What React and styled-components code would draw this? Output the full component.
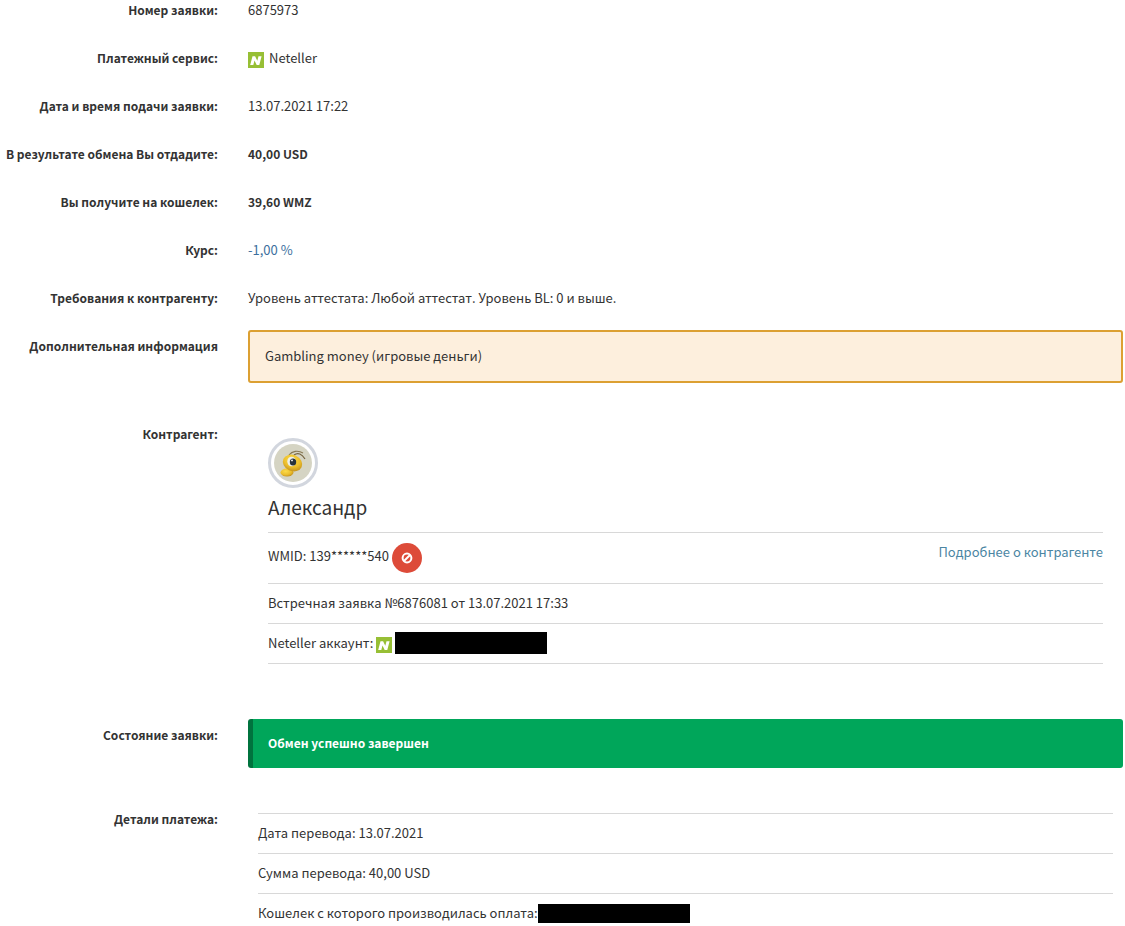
import React from 'react';
import styled, { createGlobalStyle } from 'styled-components';

export default function App() {
  return (
    <Page>
      <GlobalStyle />
      <Details>
        <Field label="Номер заявки:">6875973</Field>
        <Field label="Платежный сервис:">
          <WithIcon>
            <NetellerIcon />
            Neteller
          </WithIcon>
        </Field>
        <Field label="Дата и время подачи заявки:">13.07.2021 17:22</Field>
        <Field label="В результате обмена Вы отдадите:">
          <Amount>40,00 USD</Amount>
        </Field>
        <Field label="Вы получите на кошелек:">
          <Amount>39,60 WMZ</Amount>
        </Field>
        <Field label="Курс:">
          <Rate>-1,00 %</Rate>
        </Field>
        <Field label="Требования к контрагенту:">
          Уровень аттестата: Любой аттестат. Уровень BL: 0 и выше.
        </Field>
        <Field label="Дополнительная информация" block>
          <Note>Gambling money (игровые деньги)</Note>
        </Field>
        <Field label="Контрагент:" block>
          <Partner />
        </Field>
        <Field label="Состояние заявки:" block>
          <Status>Обмен успешно завершен</Status>
        </Field>
        <Field label="Детали платежа:" block>
          <Payment>
            <Item>Дата перевода: 13.07.2021</Item>
            <Item>Сумма перевода: 40,00 USD</Item>
            <Item>
              Кошелек с которого производилась оплата:
              <Hidden $height={19} />
            </Item>
          </Payment>
        </Field>
      </Details>
    </Page>
  );
}

function Field({ label, block, children }) {
  return (
    <Row $block={block}>
      <Label>{label}</Label>
      <Value $block={block}>{children}</Value>
    </Row>
  );
}

function Partner() {
  return (
    <PartnerBox>
      <Avatar>
        <AntPicture />
      </Avatar>
      <Name>Александр</Name>
      <WmidRow>
        <Wmid>
          <WmidText>WMID: 139******540</WmidText>
          <BlockButton type="button" aria-label="Заблокировать">
            <BanIcon />
          </BlockButton>
        </Wmid>
        <MoreLink href="#partner">Подробнее о контрагенте</MoreLink>
      </WmidRow>
      <List>
        <Item>Встречная заявка №6876081 от 13.07.2021 17:33</Item>
        <Item>
          <WithIcon $gap={3}>
            Neteller аккаунт:
            <NetellerIcon />
            <Hidden $height={22} />
          </WithIcon>
        </Item>
      </List>
    </PartnerBox>
  );
}

function NetellerIcon() {
  return (
    <svg width="16" height="16" viewBox="0 0 16 16" aria-hidden="true">
      <rect width="16" height="16" fill="#97bf35" />
      <path d="M2.2 13 4.5 4.2h2.6l2.2 4.6 1.2-4.6h3.1l-2.3 8.8H8.7L6.5 8.4 5.3 13z" fill="#fff" />
    </svg>
  );
}

function BanIcon() {
  return (
    <svg width="12" height="12" viewBox="0 0 12 12" fill="none" stroke="#fff" strokeWidth="2" aria-hidden="true">
      <circle cx="6" cy="6" r="4.4" />
      <path d="M3 9 9 3" />
    </svg>
  );
}

function AntPicture() {
  return (
    <svg width="38" height="38" viewBox="0 0 38 38" aria-hidden="true">
      <defs>
        <radialGradient id="head" cx="40%" cy="35%" r="70%">
          <stop offset="0" stopColor="#fbdc48" />
          <stop offset="0.6" stopColor="#ecbe2c" />
          <stop offset="1" stopColor="#c08f1c" />
        </radialGradient>
      </defs>
      <circle cx="19" cy="19" r="19" fill="#d5d4c3" />
      <path d="M15 11C18 7 24 6 29 9" fill="none" stroke="#8a7a55" strokeWidth="1.2" />
      <path d="M20 11C24 8 28 10 31 15" fill="none" stroke="#75633f" strokeWidth="1.2" />
      <ellipse cx="13" cy="28.5" rx="6.5" ry="4" fill="url(#head)" />
      <ellipse cx="18.5" cy="19" rx="10" ry="8" fill="url(#head)" transform="rotate(25 18.5 19)" />
      <ellipse cx="17.5" cy="17.5" rx="4.2" ry="4.8" fill="#eef0ea" />
      <ellipse cx="19" cy="18" rx="3.2" ry="3.6" fill="#28333c" />
      <circle cx="18" cy="16.4" r="0.9" fill="#fff" />
    </svg>
  );
}

const GlobalStyle = createGlobalStyle`
  body {
    margin: 0;
    background: #fff;
    color: #333;
    font-family: 'Noto Sans CJK SC', 'Noto Sans', sans-serif;
    font-size: 13px;
    line-height: 20px;
  }
`;

const Page = styled.main`
  padding: 0 2px;
`;

const Details = styled.dl`
  margin: 0;
`;

const Row = styled.div`
  display: grid;
  grid-template-columns: 216px 1fr;
  column-gap: 30px;
  margin-bottom: ${(p) => (p.$block ? 35 : 22)}px;

  &:first-child > * {
    padding-top: 0;
  }

  &:last-child {
    margin-bottom: 0;
  }
`;

const Label = styled.dt`
  padding-top: 6px;
  font-size: 12px;
  font-weight: 700;
  text-align: right;
  white-space: nowrap;
`;

const Value = styled.dd`
  min-width: 0;
  margin: 0;
  padding-top: ${(p) => (p.$block ? 0 : 6)}px;
`;

const WithIcon = styled.div`
  display: flex;
  align-items: center;
  gap: ${(p) => p.$gap || 5}px;

  svg {
    position: relative;
    top: 2px;
  }
`;

const Amount = styled.strong`
  font-size: 12px;
  font-weight: 700;
`;

const Rate = styled.span`
  color: #3d6f9e;
`;

const Note = styled.div`
  padding: 14px 15px 15px;
  border: 2px solid #dca032;
  border-radius: 3px;
  background: #fdefdd;
`;

const PartnerBox = styled.div`
  padding: 20px;
`;

const Avatar = styled.div`
  display: flex;
  align-items: center;
  justify-content: center;
  box-sizing: border-box;
  width: 50px;
  height: 50px;
  border: 3px solid #d2d6de;
  border-radius: 50%;
`;

const Name = styled.h3`
  margin: 0;
  padding: 7px 0 13px;
  font-size: 19px;
  font-weight: 400;
  line-height: 24px;
`;

const WmidRow = styled.div`
  display: flex;
  align-items: flex-start;
  justify-content: space-between;
  padding: 10px 0;
  border-top: 1px solid #d8d8d8;
`;

const Wmid = styled.div`
  display: flex;
  align-items: flex-start;
  gap: 3px;
`;

const WmidText = styled.span`
  padding-top: 3px;
`;

const BlockButton = styled.button`
  display: flex;
  align-items: center;
  justify-content: center;
  width: 30px;
  height: 30px;
  padding: 0;
  border: 0;
  border-radius: 50%;
  background: #dd4b39;
  cursor: pointer;
`;

const MoreLink = styled.a`
  color: #4b86a3;
  line-height: 18px;
  text-decoration: none;
`;

const List = styled.ul`
  margin: 0;
  padding: 0;
  border-bottom: 1px solid #d8d8d8;
  list-style: none;
`;

const Item = styled.li`
  display: flex;
  align-items: center;
  box-sizing: border-box;
  height: 40px;
  padding-bottom: 1px;
  border-top: 1px solid #d8d8d8;
`;

const Hidden = styled.span`
  width: 152px;
  height: ${(p) => p.$height}px;
  background: #000;
`;

const Status = styled.div`
  padding: 14px 15px 15px;
  border-left: 5px solid #00733e;
  border-radius: 3px;
  background: #00a65a;
  color: #fff;
  font-size: 12px;
  font-weight: 700;
`;

const Payment = styled(List)`
  padding: 10px 10px 0;
  border-bottom: 0;

  li:last-child {
    height: auto;
    padding: 9px 0 0;
  }
`;
